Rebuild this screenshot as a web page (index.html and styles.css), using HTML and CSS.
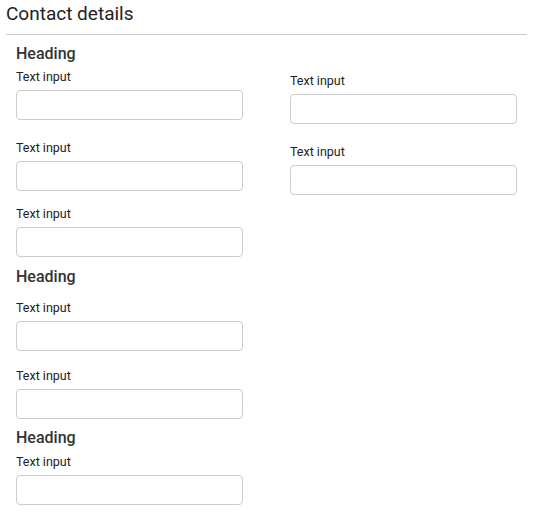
FILE: index.html
```html
<!DOCTYPE html>
<html lang="en">
<head>
<meta charset="utf-8">
<title>Contact details</title>
<link rel="stylesheet" href="styles.css">
</head>
<body>
<div class="page">
  <h1 class="title">Contact details</h1>
  <div class="columns">
    <div class="col">
      <h2 class="heading">Heading</h2>
      <div class="field f-after-heading">
        <label class="label">Text input</label>
        <input class="input" type="text">
      </div>
      <div class="field f-20">
        <label class="label">Text input</label>
        <input class="input" type="text">
      </div>
      <div class="field f-15">
        <label class="label">Text input</label>
        <input class="input" type="text">
      </div>
      <h2 class="heading h-10">Heading</h2>
      <div class="field f-13">
        <label class="label">Text input</label>
        <input class="input" type="text">
      </div>
      <div class="field f-17">
        <label class="label">Text input</label>
        <input class="input" type="text">
      </div>
      <h2 class="heading h-9">Heading</h2>
      <div class="field f-6">
        <label class="label">Text input</label>
        <input class="input" type="text">
      </div>
    </div>
    <div class="col col-right">
      <div class="field">
        <label class="label">Text input</label>
        <input class="input" type="text">
      </div>
      <div class="field f-20">
        <label class="label">Text input</label>
        <input class="input" type="text">
      </div>
    </div>
  </div>
</div>
</body>
</html>
```

FILE: styles.css
```css
* { box-sizing: border-box; }

html, body {
  margin: 0;
  padding: 0;
  background: #ffffff;
}

body {
  font-family: Roboto, "Liberation Sans", Arial, sans-serif;
  color: #333333;
}

.page {
  padding: 0 18px 0 6px;
}

.title {
  margin: 0;
  padding: 2px 0 8px;
  font-size: 19px;
  line-height: 24px;
  font-weight: 400;
  color: #222222;
  border-bottom: 1px solid #cccccc;
}

.columns {
  display: flex;
  gap: 47px;
  padding: 9px 0 0 10px;
}

.col {
  display: flex;
  flex-direction: column;
  width: 227px;
}

.col-right {
  padding-top: 29px;
}

.heading {
  margin: 0;
  font-size: 16px;
  line-height: 20px;
  font-weight: 500;
  color: #333333;
}

.h-10 { margin-top: 10px; }
.h-9 { margin-top: 9px; }

.field {
  display: flex;
  flex-direction: column;
  gap: 5px;
}

.f-after-heading { margin-top: 5px; }
.f-20 { margin-top: 20px; }
.f-17 { margin-top: 17px; }
.f-15 { margin-top: 15px; }
.f-13 { margin-top: 13px; }
.f-6 { margin-top: 6px; }

.label {
  display: block;
  font-size: 12.5px;
  line-height: 16px;
  font-weight: 400;
  color: #222222;
}

.input {
  display: block;
  width: 227px;
  height: 30px;
  margin: 0;
  padding: 4px 8px;
  border: 1px solid #cccccc;
  border-radius: 4px;
  background: #ffffff;
  font: inherit;
  font-size: 13px;
  color: #333333;
}
```
